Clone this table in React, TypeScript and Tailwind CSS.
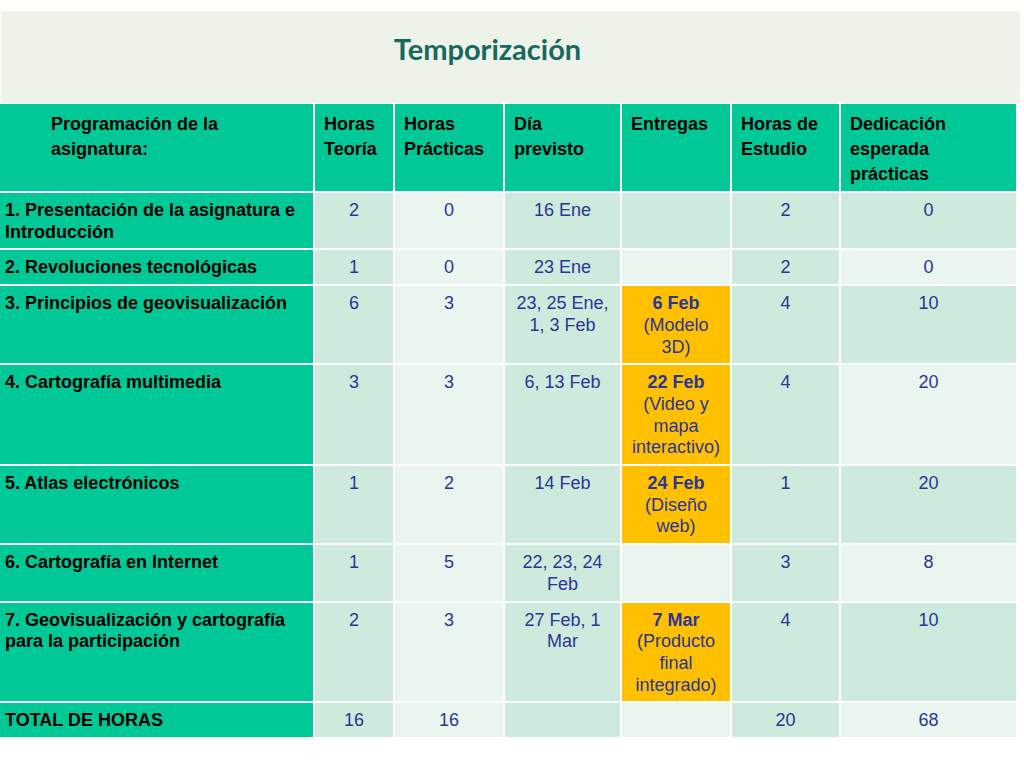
import React from 'react';

type Row = {
  name: string;
  teoria: string;
  practicas: string;
  dia: string;
  entrega?: { fecha: string; detalle: string };
  estudio: string;
  dedicacion: string;
};

const rows: Row[] = [
  { name: '1. Presentación de la asignatura e Introducción', teoria: '2', practicas: '0', dia: '16 Ene', estudio: '2', dedicacion: '0' },
  { name: '2. Revoluciones tecnológicas', teoria: '1', practicas: '0', dia: '23 Ene', estudio: '2', dedicacion: '0' },
  { name: '3. Principios de geovisualización', teoria: '6', practicas: '3', dia: '23, 25 Ene, 1, 3 Feb', entrega: { fecha: '6 Feb', detalle: '(Modelo 3D)' }, estudio: '4', dedicacion: '10' },
  { name: '4. Cartografía multimedia', teoria: '3', practicas: '3', dia: '6, 13 Feb', entrega: { fecha: '22 Feb', detalle: '(Video y mapa interactivo)' }, estudio: '4', dedicacion: '20' },
  { name: '5. Atlas electrónicos', teoria: '1', practicas: '2', dia: '14 Feb', entrega: { fecha: '24 Feb', detalle: '(Diseño web)' }, estudio: '1', dedicacion: '20' },
  { name: '6. Cartografía en Internet', teoria: '1', practicas: '5', dia: '22, 23, 24 Feb', estudio: '3', dedicacion: '8' },
  { name: '7. Geovisualización y cartografía para la participación', teoria: '2', practicas: '3', dia: '27 Feb, 1 Mar', entrega: { fecha: '7 Mar', detalle: '(Producto final integrado)' }, estudio: '4', dedicacion: '10' },
  { name: 'TOTAL DE HORAS', teoria: '16', practicas: '16', dia: '', estudio: '20', dedicacion: '68' },
];

const headers = ['Horas Teoría', 'Horas Prácticas', 'Día previsto', 'Entregas', 'Horas de Estudio', 'Dedicación esperada prácticas'];

const DARK = 'bg-[#cdeadd]';
const LIGHT = 'bg-[#e9f5ee]';

function Cell({ bg, children }: { bg: string; children?: React.ReactNode }) {
  return (
    <div className={`${bg} px-2 pt-[7px] pb-[5px] text-center text-[18px] leading-[21.7px] text-[#2b3595]`}>
      {children}
    </div>
  );
}

export default function App() {
  return (
    <div className="w-[1024px] h-[768px] bg-white pt-[11px] font-['Liberation_Sans',Arial,sans-serif] overflow-hidden">
      <div className="ml-[1px] w-[1019px] h-[92px] bg-[#edf3e9] flex items-start justify-center pr-[46px] pt-[20px]">
        <h1 className="font-['Lato',sans-serif] font-bold text-[29px] leading-[36px] text-[#17695f]">
          Temporización
        </h1>
      </div>

      <div className="mt-[1px] w-[1016px] grid grid-cols-[313px_78px_108px_115px_108px_107px_175px] gap-[2px] bg-white">
        <div className="bg-[#00c896] pl-[51px] pr-2 pt-[8px] pb-[4px] text-[18px] leading-[25px] font-bold text-black">
          Programación de la asignatura:
        </div>
        {headers.map((h) => (
          <div key={h} className="bg-[#00c896] pl-[9px] pr-[6px] pt-[8px] pb-[4px] text-[18px] leading-[25px] font-bold text-black">
            {h}
          </div>
        ))}

        {rows.map((r, i) => {
          const odd = i % 2 === 0 && i < 7;
          const alt = odd ? DARK : LIGHT;
          return (
            <React.Fragment key={r.name}>
              <div className="bg-[#00c896] pl-[5px] pr-1 pt-[7px] pb-[5px] text-[18px] leading-[21.7px] font-bold text-black">
                {r.name}
              </div>
              <Cell bg={DARK}>{r.teoria}</Cell>
              <Cell bg={LIGHT}>{r.practicas}</Cell>
              <Cell bg={DARK}>{r.dia}</Cell>
              {r.entrega ? (
                <Cell bg="bg-[#ffc000]">
                  <div className="font-bold">{r.entrega.fecha}</div>
                  <div>{r.entrega.detalle}</div>
                </Cell>
              ) : (
                <Cell bg={alt} />
              )}
              <Cell bg={DARK}>{r.estudio}</Cell>
              <Cell bg={alt}>{r.dedicacion}</Cell>
            </React.Fragment>
          );
        })}
      </div>
    </div>
  );
}
